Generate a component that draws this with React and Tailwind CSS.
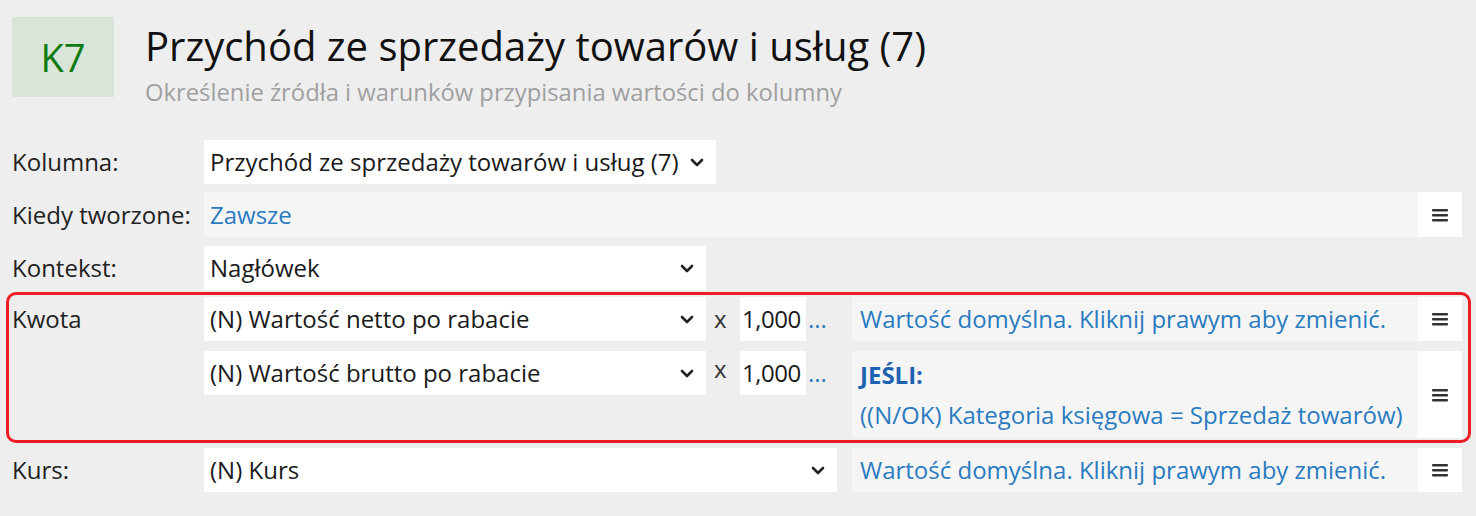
import React from "react";

const Chevron = () => (
  <svg width="14" height="9" viewBox="0 0 14 9" className="shrink-0">
    <polyline points="2,2 7,7 12,2" fill="none" stroke="#222" strokeWidth="2.6" strokeLinecap="round" strokeLinejoin="round" />
  </svg>
);

const Menu = () => (
  <svg width="16" height="14" viewBox="0 0 16 14">
    <rect x="0" y="1" width="16" height="2.4" rx="1" fill="#333" />
    <rect x="0" y="6" width="16" height="2.4" rx="1" fill="#333" />
    <rect x="0" y="11" width="16" height="2.4" rx="1" fill="#333" />
  </svg>
);

const Select = ({ value, width }) => (
  <div className={`${width} h-[44px] bg-white flex items-center justify-between pl-[6px] pr-[12px] shrink-0`}>
    <span className="text-[#1a1a1a] whitespace-nowrap">{value}</span>
    <Chevron />
  </div>
);

const Multiplier = () => (
  <>
    <div className="w-[34px] pl-[8px] text-[#333]">x</div>
    <div className="w-[66px] h-[44px] bg-white flex items-center pl-[2px] text-[#1a1a1a] shrink-0 tracking-[-0.5px]">1,000</div>
    <div className="w-[46px] pl-[2px] text-[#2b7bc0] self-start h-[44px] flex items-center">...</div>
  </>
);

const Info = ({ children, height = "h-[44px]", pad = "pl-[8px]" }) => (
  <div className={`flex-1 flex ${height}`}>
    <div className={`flex-1 bg-[#f5f5f5] ${pad} text-[#2a7bc0] flex flex-col justify-center whitespace-nowrap`}>{children}</div>
    <div className="w-[44px] bg-white flex items-center justify-center">
      <Menu />
    </div>
  </div>
);

export default function App() {
  return (
    <div className="w-[1476px] h-[516px] bg-[#eeeeee] font-['Open_Sans',sans-serif] text-[24px] overflow-hidden">
      <div className="flex items-start pl-3 pt-[17px] h-[140px]">
        <div className="w-[102px] h-[80px] bg-[#d9e5d9] flex items-center justify-center text-[#0f7a0f] text-[38px] font-medium">K7</div>
        <div className="ml-[31px] pt-[5px]">
          <h1 className="text-[40px] leading-[48px] text-[#111] whitespace-nowrap">Przychód ze sprzedaży towarów i usług (7)</h1>
          <p className="mt-[7px] text-[23.8px] text-[#a0a0a0] leading-[30px] whitespace-nowrap">Określenie źródła i warunków przypisania wartości do kolumny</p>
        </div>
      </div>

      <div className="pl-[6px] pr-[5px]">
        <div className="pl-[6px] pr-[9px] flex items-center">
          <div className="w-[192px] text-[#222]">Kolumna:</div>
          <Select value="Przychód ze sprzedaży towarów i usług (7)" width="w-[512px]" />
        </div>

        <div className="pl-[6px] pr-[9px] flex items-center mt-[8px]">
          <div className="w-[192px] text-[#222] whitespace-nowrap">Kiedy tworzone:</div>
          <Info height="h-[45px]" pad="pl-[6px]">Zawsze</Info>
        </div>

        <div className="pl-[6px] pr-[9px] flex items-center mt-[9px]">
          <div className="w-[192px] text-[#222]">Kontekst:</div>
          <Select value="Nagłówek" width="w-[502px]" />
        </div>

        <div className="mt-[2px] border-[3px] border-[#ee1c24] rounded-[10px] pl-[3px] pr-[6px] py-[2px]">
          <div className="flex items-center">
            <div className="w-[192px] text-[#222]">Kwota</div>
            <Select value="(N) Wartość netto po rabacie" width="w-[502px]" />
            <Multiplier />
            <Info>Wartość domyślna. Kliknij prawym aby zmienić.</Info>
          </div>
          <div className="flex items-start mt-[10px]">
            <div className="w-[192px]" />
            <Select value="(N) Wartość brutto po rabacie" width="w-[502px]" />
            <Multiplier />
            <Info height="h-[87px]">
              <div className="font-bold text-[#1f63b0] leading-[40px]">JEŚLI:</div>
              <div className="leading-[40px]">((N/OK) Kategoria księgowa = Sprzedaż towarów)</div>
            </Info>
          </div>
        </div>

        <div className="pl-[6px] pr-[9px] flex items-center mt-[5px]">
          <div className="w-[192px] text-[#222]">Kurs:</div>
          <Select value="(N) Kurs" width="w-[633px]" />
          <div className="w-[15px]" />
          <Info>Wartość domyślna. Kliknij prawym aby zmienić.</Info>
        </div>
      </div>
    </div>
  );
}
